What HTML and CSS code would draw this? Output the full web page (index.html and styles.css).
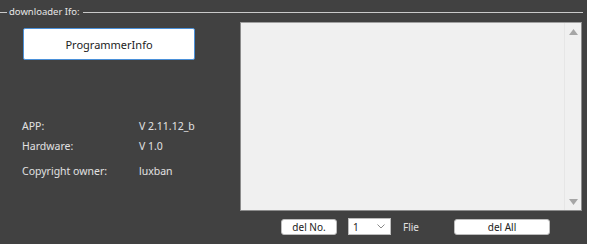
FILE: index.html
```html
<!DOCTYPE html>
<html>
<head>
<meta charset="utf-8">
<link rel="stylesheet" href="styles.css">
</head>
<body>
<div class="panel">
  <div class="legend-row">
    <span class="line-left"></span>
    <span class="legend">downloader Ifo:</span>
    <span class="line-right"></span>
  </div>
  <div class="content">
    <div class="left">
      <button class="prog-btn">ProgrammerInfo</button>
      <div class="info">
        <div class="info-row"><span class="k">APP:</span><span class="v">V 2.11.12_b</span></div>
        <div class="info-row"><span class="k">Hardware:</span><span class="v">V 1.0</span></div>
        <div class="info-row gap"><span class="k">Copyright owner:</span><span class="v">luxban</span></div>
      </div>
    </div>
    <div class="right">
      <div class="textbox">
        <div class="area"></div>
        <div class="scroll">
          <svg width="9" height="6" viewBox="0 0 9 6"><path d="M0 6 L4.5 0 L9 6 Z" fill="#a6a6a6"/></svg>
          <svg width="9" height="6" viewBox="0 0 9 6"><path d="M0 0 L4.5 6 L9 0 Z" fill="#a6a6a6"/></svg>
        </div>
      </div>
      <div class="controls">
        <button class="small-btn del-no">del No.</button>
        <div class="select"><span>1</span><svg width="8" height="5" viewBox="0 0 8 5"><path d="M0.5 0.5 L4 4 L7.5 0.5" fill="none" stroke="#8a8a8a" stroke-width="1"/></svg></div>
        <span class="flie">Flie</span>
        <button class="small-btn del-all">del All</button>
      </div>
    </div>
  </div>
</div>
</body>
</html>
```
FILE: styles.css
```css
html, body {
  margin: 0;
  padding: 0;
  background: #ffffff;
}
body {
  font-family: "Noto Sans", "Noto Sans CJK SC", sans-serif;
  width: 592px;
  height: 251px;
}
.panel {
  width: 587px;
  height: 244px;
  background: #414141;
  box-sizing: border-box;
  padding-top: 4px;
}
.legend-row {
  display: flex;
  align-items: center;
  height: 16px;
}
.line-left {
  width: 7px;
  height: 1px;
  background: #c9c9c9;
}
.legend {
  color: #e6e6e6;
  font-size: 9.5px;
  padding: 0 3px 0 2px;
  line-height: 16px;
}
.line-right {
  flex: 1;
  height: 1px;
  background: #c9c9c9;
  margin-right: 4px;
}
.content {
  display: flex;
}
.left {
  width: 240px;
  padding-left: 23px;
  box-sizing: border-box;
  display: flex;
  flex-direction: column;
}
.prog-btn {
  width: 172px;
  height: 32px;
  margin-top: 8px;
  background: #ffffff;
  border: 1px solid #4a90d9;
  border-radius: 2px;
  font-family: "Noto Sans", sans-serif;
  font-size: 11px;
  color: #222;
  padding: 0;
}
.info {
  margin-top: 56px;
  margin-left: -1px;
  color: #e2e2e2;
  font-size: 10.5px;
}
.info-row {
  display: flex;
  height: 20px;
  align-items: center;
}
.info-row.gap {
  margin-top: 5px;
}
.k {
  width: 117px;
}
.right {
  display: flex;
  flex-direction: column;
}
.textbox {
  width: 342px;
  height: 189px;
  margin-top: 2px;
  background: #f0f0f0;
  border: 1px solid #8c8c8c;
  border-top-color: #a0a0a0;
  box-sizing: border-box;
  display: flex;
}
.area {
  flex: 1;
}
.scroll {
  width: 16px;
  border-left: 1px solid #e6e6e6;
  display: flex;
  flex-direction: column;
  justify-content: space-between;
  align-items: center;
  padding: 6px 0 5px;
}
.controls {
  display: flex;
  align-items: center;
  height: 17px;
  margin-top: 7px;
  font-size: 10px;
}
.small-btn {
  height: 16px;
  background: #ffffff;
  border: 1px solid #bdbdbd;
  border-radius: 3px;
  font-family: "Noto Sans", sans-serif;
  font-size: 10px;
  color: #222;
  padding: 0;
  line-height: 14px;
}
.del-no {
  width: 56px;
  margin-left: 41px;
}
.select {
  width: 43px;
  height: 17px;
  margin-left: 11px;
  background: #ffffff;
  border: 1px solid #bdbdbd;
  box-sizing: border-box;
  display: flex;
  align-items: center;
  justify-content: space-between;
  padding: 0 5px 0 4px;
  color: #222;
}
.flie {
  margin-left: 12px;
  color: #e2e2e2;
}
.del-all {
  width: 96px;
  margin-left: 35px;
}
```
